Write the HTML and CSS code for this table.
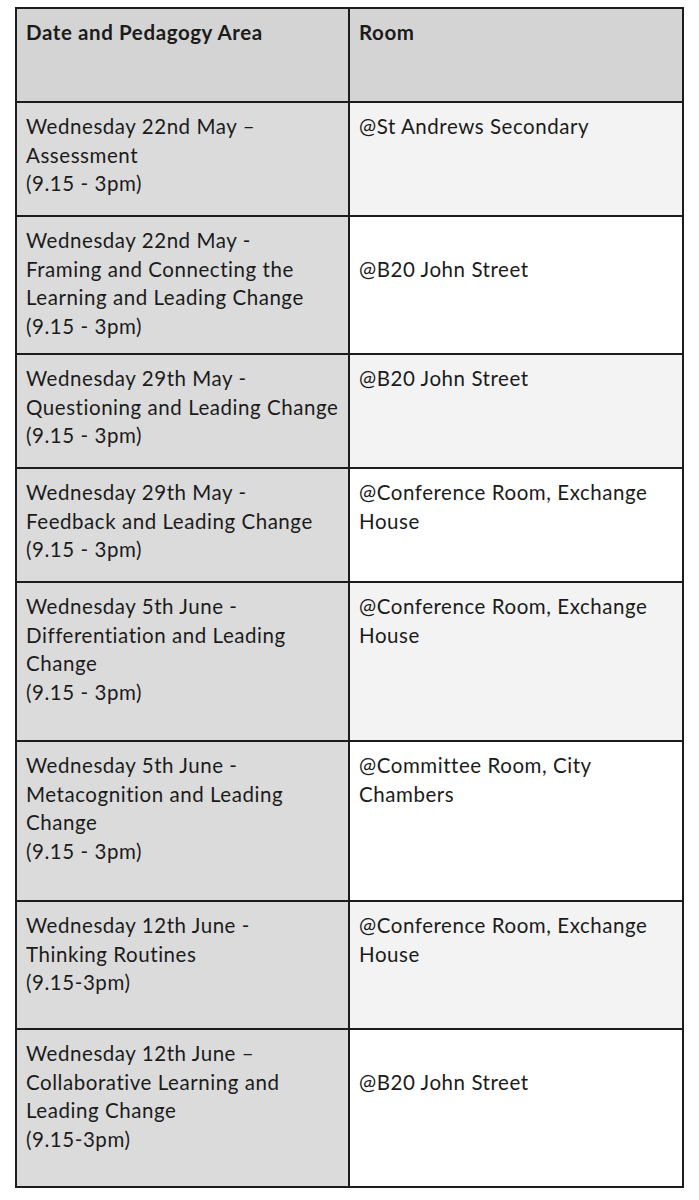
FILE: index.html
```html
<!DOCTYPE html>
<html lang="en">
<head>
<meta charset="utf-8">
<title>Date and Pedagogy Area</title>
<link rel="stylesheet" href="styles.css">
</head>
<body>
<div class="schedule">
  <div class="cell head">Date and Pedagogy Area</div>
  <div class="cell head">Room</div>

  <div class="cell date">Wednesday 22nd May –<br>Assessment<br>(9.15 - 3pm)</div>
  <div class="cell room odd">@St Andrews Secondary</div>

  <div class="cell date">Wednesday 22nd May -<br>Framing and Connecting the<br>Learning and Leading Change<br>(9.15 - 3pm)</div>
  <div class="cell room even lower">@B20 John Street</div>

  <div class="cell date">Wednesday 29th May -<br>Questioning and Leading Change<br>(9.15 - 3pm)</div>
  <div class="cell room odd">@B20 John Street</div>

  <div class="cell date">Wednesday 29th May -<br>Feedback and Leading Change<br>(9.15 - 3pm)</div>
  <div class="cell room even">@Conference Room, Exchange<br>House</div>

  <div class="cell date">Wednesday 5th June -<br>Differentiation and Leading<br>Change<br>(9.15 - 3pm)</div>
  <div class="cell room odd">@Conference Room, Exchange<br>House</div>

  <div class="cell date">Wednesday 5th June -<br>Metacognition and Leading<br>Change<br>(9.15 - 3pm)</div>
  <div class="cell room even">@Committee Room, City<br>Chambers</div>

  <div class="cell date">Wednesday 12th June -<br>Thinking Routines<br>(9.15-3pm)</div>
  <div class="cell room odd">@Conference Room, Exchange<br>House</div>

  <div class="cell date">Wednesday 12th June –<br>Collaborative Learning and<br>Leading Change<br>(9.15-3pm)</div>
  <div class="cell room even lower">@B20 John Street</div>
</div>
</body>
</html>
```

FILE: styles.css
```css
html, body {
  margin: 0;
  padding: 0;
  background: #ffffff;
}

body {
  padding: 7px 0 0 15px;
  font-family: Lato, "Open Sans", sans-serif;
  color: #1b1b1b;
}

.schedule {
  width: 669px;
  box-sizing: border-box;
  display: grid;
  grid-template-columns: 331px 332px;
  grid-template-rows: 92px 112px 136px 112px 112px 157px 158px 126px 156px;
  gap: 2px;
  padding: 2px;
  background: #1c1c1c;
}

.cell {
  box-sizing: border-box;
  padding: 9px 4px 0 9px;
  font-size: 20.5px;
  line-height: 28.7px;
  letter-spacing: 0.55px;
  white-space: nowrap;
}

.head {
  background: #d4d4d4;
  font-weight: 700;
  padding-top: 9px;
  letter-spacing: 0.6px;
}

.date {
  background: #dbdbdb;
}

.room.odd {
  background: #f3f3f3;
}

.room.even {
  background: #ffffff;
}

.room.lower {
  padding-top: 37.7px;
}
```
